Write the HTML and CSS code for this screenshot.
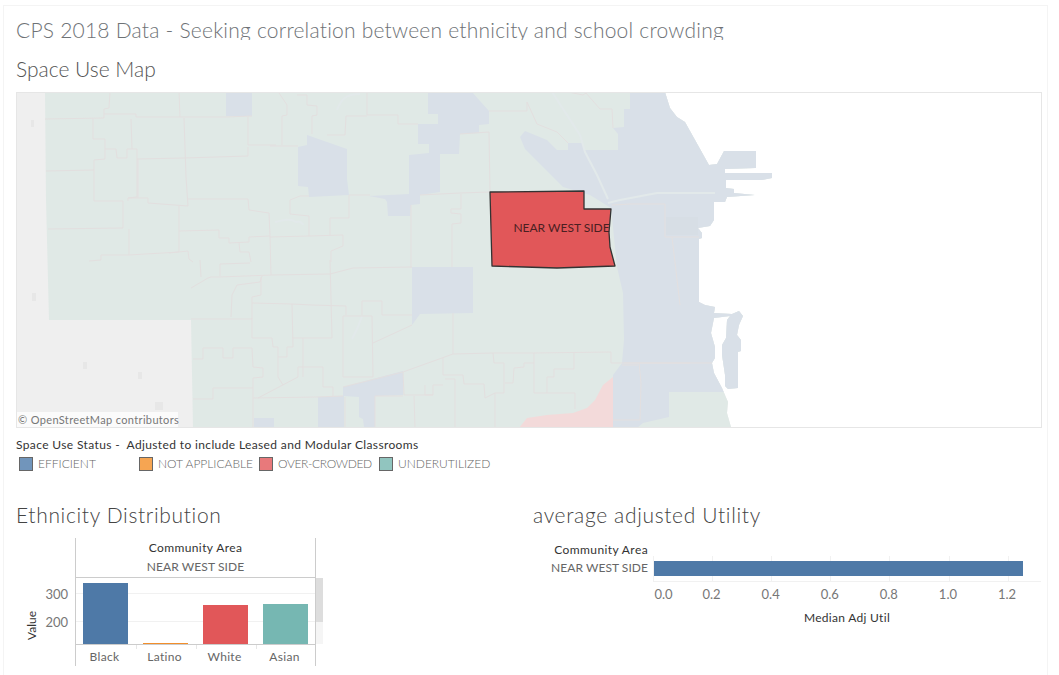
FILE: index.html
```html
<!DOCTYPE html>
<html lang="en">
<head>
<meta charset="utf-8">
<title>CPS 2018 Data</title>
<link rel="stylesheet" href="styles.css">
</head>
<body>
<main class="dash">
  <h1 class="page-title">CPS 2018 Data - Seeking correlation between ethnicity and school crowding</h1>
  <h2 class="map-title">Space Use Map</h2>
  <div class="map">
    <svg class="map-svg" viewBox="17 93 1024 334" width="1024" height="334" aria-label="Map of Chicago community areas">
      <defs>
        <clipPath id="land"><path d="M16 92H665L670 108 677 117 685 122 709 165 717 164 724 151H756V168L725 169V173H772V178L762 180H726V188L734 189V193L755 195 727 197 725 202H714V220L710 226 698 228 702 233V238L699 239V302L705 305 715 307 714 313 732 314 739 311 743 316 739 325 737 335 741 340V351L738 352 738 388 728 389 725 386 725 375 722 355 722 345 726 338 727 320 730 316 714 318 711 333 715 347 715 358 712 363 714 373 722 388 728 402 727 413 731 427H16Z"/></clipPath>
      </defs>
      <g clip-path="url(#land)">
        <rect class="m-grey" x="16" y="92" width="760" height="336"/>
        <g class="m-speck">
          <rect x="31" y="120" width="3" height="7"/><rect x="32" y="293" width="4" height="8"/><rect x="83" y="362" width="4" height="7"/><rect x="138" y="372" width="4" height="7"/><rect x="155" y="402" width="8" height="8"/>
        </g>
        <path class="m-green" d="M45 92L46 200 49 320H191L193 428H780V92Z"/>
        <path class="m-blue" d="M630 92V109H624V127L613 128 618 134V150H585L582 143H568V150H557L547 140 525 131 520 137 525 149 563 187 590 195 611 208 617 267 623 293 624 340 622 363 613 375V428H637L643 423 669 417V392H780V92Z"/>
        <path class="m-pink" d="M613 377V428H519L527 418 547 415 573 413 587 408 595 400 603 385Z"/>
        <g class="m-blue">
          <path d="M226 92H252V116H226Z"/>
          <path d="M307 135L347 149V179L349 195 309 197 308 187 298 186V147L307 145Z"/>
          <path d="M428 92H472L489 111V124L479 125V133L460 134 459 154H440V192L420 195V204L411 205 410 216H388L387 202 385 199 369 196 409 194V155L429 153V144H418V124H438V114H428Z"/>
          <path d="M412 267H473V313L420 314 412 325Z"/>
          <path d="M343 387L403 371V395L375 396V427H364L363 419 359 417V397L343 396Z"/>
          <path d="M318 397L344 396V427H318Z"/>
          <path d="M254 418H274V427H254Z"/>
        </g>
        <rect class="m-dark" x="666" y="217" width="32" height="18"/>
        <g class="m-road">
          <path d="M552 92L580 135 585 152 597 175 608 199"/>
          <path d="M608 203L620 200 657 193 715 193"/>
          <path d="M337 110C341 100 345 94 360 94"/>
          <path d="M275 222C285 220 290 218 296 222 300 220 303 224 303 225"/>
          <path d="M358 327L362 316M358 327L352 339"/>
        </g>
        <g class="m-line">
          <path d="M45 119L104 118V109L109 108 110 92"/>
          <path d="M104 114H136V117L226 117 252 116M248 117V145H276"/>
          <path d="M93 119V139H105V159L94 160V201H123V228L48 229"/>
          <path d="M46 171L94 170"/>
          <path d="M105 149H116L117 158H127V149H137V197L128 198V201"/>
          <path d="M131 119L132 149"/>
          <path d="M137 159L184 158 248 156V147"/>
          <path d="M184 118L186 177 188 206 148 203V198H128"/>
          <path d="M138 159V198"/>
          <path d="M188 199H248L249 210 269 213 270 236 249 237V242L229 243V238H219V230L179 231"/>
          <path d="M179 206V252L129 255V229"/>
          <path d="M129 255H101V260L89 261"/>
          <path d="M169 253L188 251 189 259 193 262"/>
          <path d="M239 243L240 252H249L251 262"/>
          <path d="M179 92L180 117"/>
          <path d="M270 236L271 275M270 146H298"/>
          <path d="M279 93L287 105V115L282 116V145"/>
          <path d="M297 95H307V105L317 106V115L312 116V134"/>
          <path d="M367 92V115H398V124H418"/>
          <path d="M346 116H367M346 116L345 135H327"/>
          <path d="M349 195H370"/>
          <path d="M290 200L300 196H309M290 200V214L309 216V236L270 237M309 236L343 235V246L331 251V262"/>
          <path d="M349 195V218H330V235"/>
          <path d="M411 205V268"/>
          <path d="M420 195L460 193 490 192"/>
          <path d="M461 194V209H451V213L461 214V223L452 224V267"/>
          <path d="M460 134L489 132 490 192"/>
          <path d="M489 111L527 111V102L537 124 557 132 568 143M568 92L583 95 586 93 600 109H612L613 128"/>
          <path d="M191 288L208 278 211 277H220L271 275 330 274 353 268 412 267"/>
          <path d="M200 260L201 277M220 264V276M220 264L250 263"/>
          <path d="M330 260L332 338"/>
          <path d="M191 319H252V303L292 304 312 305 346 306V315"/>
          <path d="M231 317L232 295 237 285 260 282 262 276M261 277V295L252 297V303"/>
          <path d="M252 318V338H272L273 347H278V357H287V347H293L292 304M292 338H332"/>
          <path d="M193 359H203V348H223V358H233V348H252L253 367 263 368V377L253 378V397M193 399H213V388H253"/>
          <path d="M253 398L317 397 343 396M258 398L298 377V367H303L323 367V387H333V397M303 338V377M278 357V377L283 385"/>
          <path d="M343 316H372L373 377H343Z"/>
          <path d="M362 315V301H382V315H412M373 343L412 325"/>
          <path d="M343 387L403 372 453 354 493 353 533 353 611 352V363L623 363H690"/>
          <path d="M403 372L404 395H433M375 396H403M414 396L415 427"/>
          <path d="M345 397V427M375 396V427M253 397V427"/>
          <path d="M453 313V354M443 358V375H463L464 384H484L485 398 495 393H504V363H494L493 353"/>
          <path d="M433 385H443M433 385V395H425V385M445 379H455V427"/>
          <path d="M505 383H513L514 368 524 367V363H534M534 353V393H575V409M495 393V427"/>
          <path d="M574 353V369H554V377H547V393"/>
          <path d="M639 363L641 383 640 420M613 420H640"/>
          <path d="M612 205L630 204H665V237H699M672 237L680 305"/>
          <path d="M638 365H622"/>
          <path d="M624 363H712"/>
        </g>
        <path class="m-pier" d="M724 202V258M714 220H724"/>
      </g>
      <path class="m-red" d="M490 192L584 191V209H611L609 232 610 247 615 266 557 268 492 266Z"/>
      <text class="m-label" x="561.5" y="232" text-anchor="middle">NEAR WEST SIDE</text>
    </svg>
    <div class="attrib">© OpenStreetMap contributors</div>
  </div>

  <section class="legend">
    <div class="legend-title">Space Use Status -  Adjusted to include Leased and Modular Classrooms</div>
    <ul class="legend-items">
      <li class="legend-item"><span class="swatch s-blue"></span>EFFICIENT</li>
      <li class="legend-item"><span class="swatch s-orange"></span>NOT APPLICABLE</li>
      <li class="legend-item"><span class="swatch s-red"></span><span class="tight">OVER-CROWDED</span></li>
      <li class="legend-item"><span class="swatch s-teal"></span>UNDERUTILIZED</li>
    </ul>
  </section>

  <div class="lower">
    <section>
      <h2 class="sec-title">Ethnicity Distribution</h2>
      <div class="eth">
        <div class="eth-head">
          <div class="strong head-wide">Community Area</div>
          <div class="muted">NEAR WEST SIDE</div>
        </div>
        <div class="eth-axis">
          <div class="axis-name"><span class="strong">Value</span></div>
          <div class="axis-ticks"><span>300</span><span>200</span></div>
        </div>
        <div class="eth-plot">
          <div class="bar b-blue" style="height:61px"></div>
          <div class="bar b-orange" style="height:1px"></div>
          <div class="bar b-red" style="height:39px"></div>
          <div class="bar b-teal" style="height:40px"></div>
        </div>
        <div class="scroll"><div class="thumb"></div></div>
        <div class="eth-cats">
          <span>Black</span><span>Latino</span><span>White</span><span>Asian</span>
        </div>
      </div>
    </section>
    <section>
      <h2 class="sec-title">average adjusted Utility</h2>
      <div class="util">
        <div class="util-head strong">Community Area</div>
        <div class="util-empty"></div>
        <div class="util-row muted">NEAR WEST SIDE</div>
        <div class="util-plot"><div class="util-bar"></div></div>
        <div class="util-ticks">
          <span>0.0</span><span>0.2</span><span>0.4</span><span>0.6</span><span>0.8</span><span>1.0</span><span>1.2</span>
        </div>
        <div class="util-name strong">Median Adj Util</div>
      </div>
    </section>
  </div>
</main>
</body>
</html>
```
FILE: styles.css
```css
* { box-sizing: border-box; }
html, body { margin: 0; padding: 0; background: #fff; }
body { width: 1059px; height: 675px; overflow: hidden; font-family: Lato, "Open Sans", sans-serif; }
h1, h2, ul { margin: 0; padding: 0; font-weight: 300; }
ul { list-style: none; }

.dash {
  margin: 5px 0 0 3px;
  width: 1045px;
  height: 670px;
  padding-left: 12px;
  border: 1px solid #f4f4f4;
  border-bottom: 0;
  overflow: hidden;
}
.page-title {
  margin-top: 12px;
  height: 22px;
  font-size: 21px;
  line-height: 24px;
  letter-spacing: 0.22px;
  color: #6e7276;
  overflow: hidden;
  white-space: nowrap;
}
.map-title {
  height: 52px;
  padding-top: 17px;
  font-size: 21px;
  line-height: 24px;
  color: #555;
}
.map {
  position: relative;
  width: 1026px;
  height: 336px;
  border: 1px solid #e6e6e6;
}
.map-svg { display: block; }
.m-grey { fill: #efefef; }
.m-speck { fill: #e7e7e7; }
.m-green { fill: #e0e9e6; }
.m-blue { fill: #d9e0e8; }
.m-pink { fill: #f3dada; }
.m-dark { fill: #d7dee5; }
.m-road { fill: none; stroke: #e2e9ea; stroke-width: 2; }
.m-line { fill: none; stroke: #e3dfdf; stroke-width: 1; }
.m-pier { fill: none; stroke: #e2e6ea; stroke-width: 1; }
.m-red { fill: #e15759; stroke: #333; stroke-width: 1.3; stroke-linejoin: round; }
.m-label { font-size: 12px; fill: #4a2022; font-family: Lato, sans-serif; }
.attrib {
  position: absolute;
  left: 0;
  bottom: 0;
  width: 161px;
  height: 15px;
  padding-left: 1px;
  font-size: 11px;
  line-height: 15px;
  letter-spacing: 0.35px;
  color: #777;
  background: rgba(255, 255, 255, 0.75);
  white-space: nowrap;
}

.legend { padding-top: 9px; }
.legend-title { font-size: 12px; line-height: 16px; letter-spacing: 0.37px; color: #333; white-space: pre; }
.legend-items { display: grid; grid-template-columns: repeat(4, 120px); margin-top: 4px; padding-left: 3px; }
.legend-item { display: flex; align-items: flex-start; gap: 5px; height: 14px; line-height: 14px; font-size: 12px; color: #666; white-space: nowrap; }
.tight { letter-spacing: -0.35px; }
.swatch { width: 14px; height: 14px; border: 1px solid #666; flex: none; }
.s-blue { background: #7195bb; }
.s-orange { background: #f6a552; }
.s-red { background: #e8797b; }
.s-teal { background: #91c5bf; }

.lower { display: grid; grid-template-columns: 517px 1fr; margin-top: 32px; }
.sec-title { height: 35px; font-size: 21px; line-height: 24px; letter-spacing: 0.66px; color: #444; white-space: nowrap; }
.strong { color: #333; }
.muted { color: #666; }

.eth {
  display: grid;
  grid-template-columns: 59px 241px 7px;
  grid-template-rows: 40px 66px 22px;
  font-size: 12px;
}
.eth-head {
  grid-column: 2;
  grid-row: 1;
  padding-top: 2px;
  border-left: 1px solid #ccc;
  border-right: 1px solid #ccc;
  border-bottom: 1px solid #ccc;
  text-align: center;
  line-height: 16px;
}
.head-wide { letter-spacing: 0.4px; }
.eth-head .muted { margin-top: 3px; letter-spacing: 0.1px; }
.eth-axis { grid-column: 1; grid-row: 2; display: flex; justify-content: space-between; }
.axis-name { display: flex; align-items: flex-end; padding: 0 0 4px 9px; }
.axis-name span { writing-mode: vertical-rl; transform: rotate(180deg); line-height: 14px; font-size: 12px; }
.axis-ticks {
  display: flex;
  flex-direction: column;
  gap: 12px;
  padding: 8px 7px 0 0;
  line-height: 16px;
  font-size: 13px;
  color: #777;
}
.eth-plot {
  grid-column: 2;
  grid-row: 2;
  display: grid;
  grid-template-columns: repeat(4, 60px);
  align-items: end;
  border-left: 1px solid #ccc;
  border-right: 1px solid #ccc;
  background-image: linear-gradient(#f1f1f1, #f1f1f1), linear-gradient(#f1f1f1, #f1f1f1);
  background-size: 100% 1px;
  background-position: 0 15px, 0 43px;
  background-repeat: no-repeat;
}
.bar { width: 45px; margin-left: 7px; }
.b-blue { background: #4e79a7; }
.b-orange { background: #f28e2b; }
.b-red { background: #e15759; }
.b-teal { background: #76b7b2; }
.scroll { grid-column: 3; grid-row: 2; background: #f5f5f5; }
.thumb { height: 44px; background: #ddd; }
.eth-cats {
  grid-column: 2;
  grid-row: 3;
  display: grid;
  grid-template-columns: repeat(4, 60px);
  border-left: 1px solid #ccc;
  border-right: 1px solid #ccc;
  border-top: 1px solid #ccc;
  font-size: 12px;
  line-height: 24px;
  letter-spacing: 0.3px;
  color: #666;
  text-align: center;
}
.eth-cats span { padding-right: 3px; }
.eth-cats span + span {
  background: linear-gradient(#e6e6e6, #e6e6e6) 0 0 / 1px 4px no-repeat;
}

.util {
  display: grid;
  grid-template-columns: 115px 388px;
  grid-template-rows: 20px 24px 28px 16px;
  column-gap: 5px;
  font-size: 12px;
}
.util-head { text-align: right; padding-top: 4px; line-height: 16px; letter-spacing: 0.4px; }
.util-row { text-align: right; line-height: 16px; padding-top: 2px; letter-spacing: 0.05px; }
.util-plot {
  margin-top: -2px;
  border-bottom: 1px solid #f1f1f1;
  background-image: repeating-linear-gradient(to right, #f1f1f1 0, #f1f1f1 1px, transparent 1px, transparent 59.1px);
  padding-top: 5px;
  padding-left: 1px;
}
.util-bar { width: 369px; height: 15px; background: #4e79a7; }
.util-ticks {
  grid-column: 2;
  grid-row: 3;
  display: grid;
  grid-template-columns: 29px repeat(6, 59.1px);
  padding-top: 4px;
  font-size: 13px;
  line-height: 16px;
  color: #777;
  text-align: center;
}
.util-ticks span:first-child { padding-right: 8px; }
.util-name { grid-column: 2; grid-row: 4; text-align: center; line-height: 16px; letter-spacing: 0.3px; }
```
